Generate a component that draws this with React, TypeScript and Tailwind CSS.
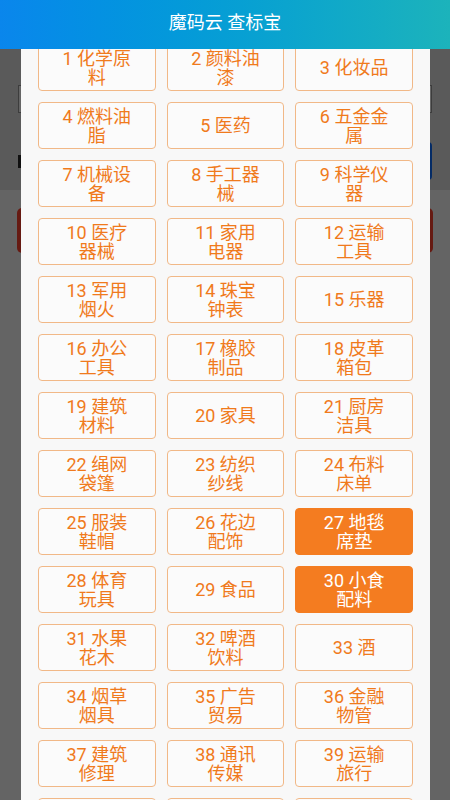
import React from "react";

const CATEGORIES: { lines: string[]; active?: boolean }[] = [
  { lines: ["1 化学原", "料"] },
  { lines: ["2 颜料油", "漆"] },
  { lines: ["3 化妆品"] },
  { lines: ["4 燃料油", "脂"] },
  { lines: ["5 医药"] },
  { lines: ["6 五金金", "属"] },
  { lines: ["7 机械设", "备"] },
  { lines: ["8 手工器", "械"] },
  { lines: ["9 科学仪", "器"] },
  { lines: ["10 医疗", "器械"] },
  { lines: ["11 家用", "电器"] },
  { lines: ["12 运输", "工具"] },
  { lines: ["13 军用", "烟火"] },
  { lines: ["14 珠宝", "钟表"] },
  { lines: ["15 乐器"] },
  { lines: ["16 办公", "工具"] },
  { lines: ["17 橡胶", "制品"] },
  { lines: ["18 皮革", "箱包"] },
  { lines: ["19 建筑", "材料"] },
  { lines: ["20 家具"] },
  { lines: ["21 厨房", "洁具"] },
  { lines: ["22 绳网", "袋篷"] },
  { lines: ["23 纺织", "纱线"] },
  { lines: ["24 布料", "床单"] },
  { lines: ["25 服装", "鞋帽"] },
  { lines: ["26 花边", "配饰"] },
  { lines: ["27 地毯", "席垫"], active: true },
  { lines: ["28 体育", "玩具"] },
  { lines: ["29 食品"] },
  { lines: ["30 小食", "配料"], active: true },
  { lines: ["31 水果", "花木"] },
  { lines: ["32 啤酒", "饮料"] },
  { lines: ["33 酒"] },
  { lines: ["34 烟草", "烟具"] },
  { lines: ["35 广告", "贸易"] },
  { lines: ["36 金融", "物管"] },
  { lines: ["37 建筑", "修理"] },
  { lines: ["38 通讯", "传媒"] },
  { lines: ["39 运输", "旅行"] },
  { lines: ["40 材料", "加工"] },
  { lines: ["41 教育", "娱乐"] },
  { lines: ["42 科技", "服务"] },
];

export default function App() {
  return (
    <div className="relative h-[800px] w-[450px] overflow-hidden bg-[#fafafa] font-['Roboto','Noto_Sans_CJK_SC',sans-serif]">
      <header className="relative z-20 flex h-[49px] items-center justify-center bg-gradient-to-r from-[#0a86ec] to-[#1cb3bb] pb-[4px]">
        <h1 className="text-[18px] font-normal text-white">魔码云 查标宝</h1>
      </header>

      {/* page behind the dialog */}
      <div className="h-[141px] bg-[#e1e1e1] px-[18px] pt-[36px]">
        <div className="h-[28px] border border-[#9a9a9a] bg-white" />
        <div className="mt-[29px] flex h-[38px] items-center justify-between pr-[-1px]">
          <div className="h-[13px] w-[12px] bg-[#2a2a2a]" />
          <div className="h-[38px] w-[110px] rounded-[4px] bg-[#0a6cff]" />
        </div>
      </div>
      <div className="px-[17px] pt-[18px]">
        <div className="h-[45px] rounded-[5px] bg-[#ff412d]" />
      </div>

      <div className="absolute inset-x-0 top-[49px] bottom-0 z-10 bg-black/60" />

      {/* category dialog */}
      <div className="absolute top-[49px] bottom-0 left-[21px] z-10 w-[409px] overflow-hidden bg-[#f8f8f8] px-[17px]">
        <div className="-mt-[5px] grid grid-cols-3 gap-x-[11px] gap-y-[11px]">
          {CATEGORIES.map((c) => (
            <button
              key={c.lines[0]}
              className={
                c.active
                  ? "flex h-[47px] flex-col items-center justify-center rounded-[4px] border border-[#f47c20] bg-[#f47c20] text-[18px] leading-[19px] text-white"
                  : "flex h-[47px] flex-col items-center justify-center rounded-[4px] border border-[#f1b887] bg-[#fbfbfb] text-[18px] leading-[19px] text-[#f07a1c]"
              }
            >
              {c.lines.map((l) => (
                <span key={l}>{l}</span>
              ))}
            </button>
          ))}
        </div>
      </div>
    </div>
  );
}
